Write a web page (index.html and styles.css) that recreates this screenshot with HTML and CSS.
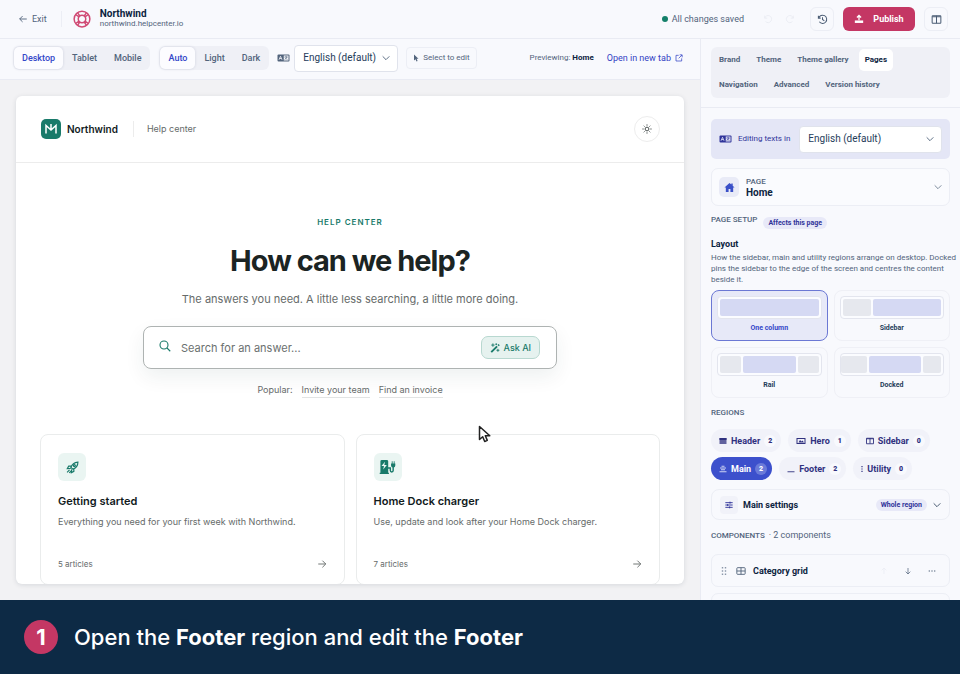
FILE: index.html
```html
<!DOCTYPE html>
<html lang="en">
<head>
  <meta charset="UTF-8" />
  <meta name="viewport" content="width=device-width, initial-scale=1.0"/>
  <title>Northwind - Help center editor</title>
  <link rel="stylesheet" href="styles.css">
</head>
<body>

  <header class="topbar">
    <a class="exit" href="#">
      <svg class="icon" viewBox="0 0 24 24"><path d="M21 12H4M11 5l-7 7 7 7"/></svg>
      Exit
    </a>
    <span class="divider"></span>
    <svg class="buoy" viewBox="0 0 24 24"><circle cx="12" cy="12" r="10.5"/><circle cx="12" cy="12" r="5"/><path d="M3.500 6l5 3.500M6 3.500l3.500 5M20.500 6l-5 3.500M18 3.500l-3.500 5M3.500 18l5-3.500M6 20.500l3.500-5M20.500 18l-5-3.500M18 20.500l-3.500-5"/></svg>
    <div class="site">
      <strong>Northwind</strong>
      <span>northwind.helpcenter.io</span>
    </div>
    <div class="topbar-right">
      <span class="saved">All changes saved</span>
      <button class="ghost-btn" disabled aria-label="Undo"><svg class="icon" viewBox="0 0 24 24"><path d="M4 4v6h6M4 10a8.500 8.500 0 1 1 2 8"/></svg></button>
      <button class="ghost-btn" disabled aria-label="Redo"><svg class="icon" viewBox="0 0 24 24"><path d="M20 4v6h-6M20 10a8.500 8.500 0 1 0-2 8"/></svg></button>
      <button class="square-btn" aria-label="History"><svg class="icon" viewBox="0 0 24 24"><path d="M3 4v5h5M3.500 9a9 9 0 1 1 1.500 8M12 7v5l4 3"/></svg></button>
      <button class="publish">
        <svg class="icon" viewBox="0 0 24 24"><path d="M12 15V4M7 8.500l5-5 5 5" stroke-width="3"/><path d="M2 18.500h20" stroke-width="6"/></svg>
        Publish
      </button>
      <button class="square-btn" aria-label="Toggle panel"><svg class="icon" viewBox="0 0 24 24"><rect x="2.500" y="4" width="19" height="16" rx="1.500"/><path d="M12 4v16M3 6h18"/></svg></button>
    </div>
  </header>

  <main class="workspace">
    <section class="canvas">
      <div class="toolbar">
        <div class="segmented">
          <button class="active">Desktop</button>
          <button>Tablet</button>
          <button>Mobile</button>
        </div>
        <div class="segmented modes">
          <button class="active">Auto</button>
          <button>Light</button>
          <button>Dark</button>
        </div>
        <svg class="lang-icon" viewBox="0 0 26 16"><rect x="1" y="1" width="24" height="14" rx="2" fill="currentColor"/><rect x="13.500" y="3" width="9.500" height="10" fill="#f7f8fc"/><path d="M4 11.500l3-7 3 7M5.500 9h3" stroke="#f7f8fc" stroke-width="1.600" fill="none"/><path d="M15 6h6.500M18.200 4v2M20 6l-4.500 5.500M16.500 7.500l4 4" stroke="currentColor" stroke-width="1.300" fill="none"/></svg>
        <div class="select">
          <select aria-label="Preview language"><option>English (default)</option></select>
          <svg class="icon" viewBox="0 0 24 24"><path d="M2 7l10 10L22 7"/></svg>
        </div>
        <button class="select-edit">
          <svg viewBox="0 0 12 16"><path d="M2 1v12l3-2.500 2 4.500 2.200-1L7.300 9.700H11z" fill="currentColor"/></svg>
          Select to edit
        </button>
        <span class="previewing">Previewing: <b>Home</b></span>
        <a class="new-tab" href="#">Open in new tab
          <svg class="icon" viewBox="0 0 24 24"><path d="M11 4H3v17h17v-8M14 2.500h7.500V10M21 3l-10 10"/></svg>
        </a>
      </div>

      <div class="stage">
        <div class="preview">
          <div class="preview-header">
            <svg class="logo" viewBox="0 0 20 20"><rect width="20" height="20" rx="5" fill="#197a6a"/><path d="M5 14.500V6.500l5 4.500 5-4.500v8M10 5v6" fill="none" stroke="#fff" stroke-width="1.500"/></svg>
            <strong>Northwind</strong>
            <span class="help-label">Help center</span>
            <button class="theme-toggle" aria-label="Theme"><svg class="icon" viewBox="0 0 24 24"><circle cx="12" cy="12" r="4.500"/><path d="M12 1v3M12 20v3M1 12h3M20 12h3M4.200 4.200l2 2M17.800 17.800l2 2M4.200 19.800l2-2M17.800 6.200l2-2"/></svg></button>
          </div>

          <div class="hero">
            <p class="eyebrow">HELP CENTER</p>
            <h1>How can we help?</h1>
            <p class="lead">The answers you need. A little less searching, a little more doing.</p>
            <div class="search">
              <svg class="icon" viewBox="0 0 24 24"><circle cx="10" cy="10" r="8"/><path d="M16 16l6.500 6.500"/></svg>
              <input type="search" placeholder="Search for an answer..." aria-label="Search for an answer">
              <button class="ask">
                <svg class="icon" viewBox="0 0 24 24"><path d="M3 22L17 8" stroke-width="4.500"/><path d="M19.500 6.500L22 4" stroke-width="4"/><path d="M7 1v8M3 5h8M15 1v4M13 3h4M19 14v7M15.500 17.500h7"/></svg>
                Ask AI
              </button>
            </div>
            <div class="popular">
              <span>Popular:</span>
              <a href="#">Invite your team</a>
              <a href="#">Find an invoice</a>
            </div>
          </div>

          <div class="categories">
            <a class="category" href="#">
              <span class="tile"><svg class="icon" viewBox="0 0 24 24"><path d="M9 12C11 6 15 2.500 22 2c0 7-3.500 11-9 13zM10 9.500H5L2.500 14l6-.5M14.500 14v5L10 21.500l.5-6M6.500 16.500L2 21M10 18l-4 4"/><circle cx="15.500" cy="8.500" r="1.800"/></svg></span>
              <h2>Getting started</h2>
              <p>Everything you need for your first week with Northwind.</p>
              <span class="meta">5 articles <svg class="icon" viewBox="0 0 24 24"><path d="M3 12h18M13 4l8 8-8 8"/></svg></span>
            </a>
            <a class="category" href="#">
              <span class="tile charger"><svg viewBox="0 0 24 22"><path d="M2 3a2 2 0 0 1 2-2h7a2 2 0 0 1 2 2v16h1v2H1v-2h1zM8.500 3.500l-5 6H7l-1 5 5-6.500H7.500zM18 3h1.200v3h1.600V3H22v3h1v3a3 3 0 0 1-2 2.800V16a3 3 0 0 1-6 0v-2.500h-2v-2h4V16a1 1 0 0 0 2 0v-4.200A3 3 0 0 1 17 9V6h1z" fill="currentColor" fill-rule="evenodd"/></svg></span>
              <h2>Home Dock charger</h2>
              <p>Use, update and look after your Home Dock charger.</p>
              <span class="meta">7 articles <svg class="icon" viewBox="0 0 24 24"><path d="M3 12h18M13 4l8 8-8 8"/></svg></span>
            </a>
          </div>
        </div>
      </div>
    </section>

    <aside class="panel">
      <nav class="tabs">
        <button>Brand</button>
        <button>Theme</button>
        <button>Theme gallery</button>
        <button class="active">Pages</button>
        <button>Navigation</button>
        <button>Advanced</button>
        <button>Version history</button>
      </nav>

      <div class="panel-body">
        <div class="editing">
          <svg class="lang-icon" viewBox="0 0 26 16"><rect x="1" y="1" width="24" height="14" rx="2" fill="currentColor"/><rect x="13.500" y="3" width="9.500" height="10" fill="#e4e6f6"/><path d="M4 11.500l3-7 3 7M5.500 9h3" stroke="#e4e6f6" stroke-width="1.600" fill="none"/><path d="M15 6h6.500M18.200 4v2M20 6l-4.500 5.500M16.500 7.500l4 4" stroke="currentColor" stroke-width="1.300" fill="none"/></svg>
          <label for="textLang">Editing texts in</label>
          <div class="select">
            <select id="textLang"><option>English (default)</option></select>
            <svg class="icon" viewBox="0 0 24 24"><path d="M2 7l10 10L22 7"/></svg>
          </div>
        </div>

        <button class="page-card">
          <span class="page-icon"><svg viewBox="0 0 24 24"><path d="M12 2L1 12h3v10h6v-7h4v7h6V12h3l-4-3.700V3h-3v2.600z" fill="currentColor"/></svg></span>
          <span class="page-name"><small>PAGE</small>Home</span>
          <svg class="icon chevron" viewBox="0 0 24 24"><path d="M2 7l10 10L22 7"/></svg>
        </button>

        <div class="setup">
          <h3>PAGE SETUP</h3>
          <span class="badge">Affects this page</span>
        </div>

        <h4>Layout</h4>
        <p class="hint">How the sidebar, main and utility regions arrange on desktop. Docked pins the sidebar to the edge of the screen and centres the content beside it.</p>

        <div class="layouts">
          <button class="layout active"><span class="frame one"><i class="fill"></i></span>One column</button>
          <button class="layout"><span class="frame side"><i></i><i class="fill"></i></span>Sidebar</button>
          <button class="layout"><span class="frame rail"><i></i><i class="fill"></i><i></i></span>Rail</button>
          <button class="layout"><span class="frame docked"><i></i><i class="fill"></i><i></i></span>Docked</button>
        </div>

        <h3>REGIONS</h3>
        <div class="regions">
          <button><svg viewBox="0 0 16 16"><path d="M1 2h14v12H1z" fill="currentColor" opacity=".75"/><path d="M1 2h14v4H1z" fill="currentColor"/></svg>Header<b>2</b></button>
          <button><svg class="wide" viewBox="0 0 20 16"><path d="M1 2h18v12H1zM3 4v8h14V4zM5 11l3-5 3 3 2-2 3 4z" fill="currentColor" fill-rule="evenodd"/></svg>Hero<b>1</b></button>
          <button><svg viewBox="0 0 16 16"><path d="M1 2.500h14v11H1zM8 2v11M1 3.500h14" fill="none" stroke="currentColor" stroke-width="1.800"/></svg>Sidebar<b>0</b></button>
          <button class="active"><svg viewBox="0 0 16 16"><path d="M5 2.500h6M2 6h12M4 9.500h8M1 13.500h14" fill="none" stroke="currentColor" stroke-width="1.500"/></svg>Main<b>2</b></button>
          <button><svg viewBox="0 0 16 16"><path d="M1 13.500h14" stroke="currentColor" stroke-width="1.800"/></svg>Footer<b>2</b></button>
          <button><svg class="thin" viewBox="0 0 4 16"><path d="M2 2v12" stroke="currentColor" stroke-width="2.400" stroke-dasharray="2.400"/></svg>Utility<b>0</b></button>
        </div>

        <button class="settings">
          <span class="settings-icon"><svg class="icon" viewBox="0 0 24 24"><path d="M1 5h22M1 12h22M1 19h22M15 2v6M8 9v6M14 16v6" stroke-width="2.800"/></svg></span>
          Main settings
          <span class="badge">Whole region</span>
          <svg class="icon chevron" viewBox="0 0 24 24"><path d="M2 7l10 10L22 7"/></svg>
        </button>

        <h3 class="components">COMPONENTS <span>· 2 components</span></h3>

        <div class="component">
          <svg class="grip" viewBox="0 0 6 10"><path d="M1.500 1v8M4.500 1v8" stroke="currentColor" stroke-width="1.400" stroke-dasharray="1.600"/></svg>
          <svg class="icon" viewBox="0 0 24 24"><rect x="2" y="4" width="20" height="16" rx="2"/><path d="M12 4v16M2 12h20"/></svg>
          <strong>Category grid</strong>
          <button disabled aria-label="Move up"><svg class="icon" viewBox="0 0 24 24"><path d="M12 21V3M5 10l7-7 7 7"/></svg></button>
          <button aria-label="Move down"><svg class="icon" viewBox="0 0 24 24"><path d="M12 3v18M5 14l7 7 7-7"/></svg></button>
          <button aria-label="More"><svg class="icon" viewBox="0 0 24 24"><path d="M2 12h4M10 12h4M18 12h4" stroke-width="3.500"/></svg></button>
        </div>
        <div class="component"></div>
      </div>
    </aside>
  </main>

  <footer class="caption">
    <span class="step">1</span>
    <p>Open the <b>Footer</b> region and edit the <b>Footer</b></p>
  </footer>

  <svg class="cursor" viewBox="0 0 14 18"><path d="M1.500 1.500v13l3.200-2.800 2 4.800 2.600-1.100-2-4.600h4.500z" fill="#fff" stroke="#222" stroke-width="1.500" stroke-linejoin="round"/></svg>

</body>
</html>
```

FILE: styles.css
```css
* {
  box-sizing: border-box;
}

body {
  margin: 0;
  height: 100vh;
  display: flex;
  flex-direction: column;
  overflow: hidden;
  font-family: Roboto, sans-serif;
  font-size: 9px;
  line-height: 12px;
  color: #52647c;
  background: #f8f9fd;
}

h1, h2, h3, h4, p {
  margin: 0;
}

button, select, input {
  font: inherit;
  color: inherit;
  margin: 0;
  padding: 0;
  border: 0;
  background: none;
}

a {
  color: inherit;
  text-decoration: none;
}

svg {
  display: block;
  flex: none;
}

.icon {
  width: 10px;
  height: 10px;
  fill: none;
  stroke: currentColor;
  stroke-width: 2.2;
}

/* top bar */
.topbar {
  flex: none;
  display: flex;
  align-items: center;
  height: 39px;
  padding: 0 12px 0 18px;
  border-bottom: 1px solid #e9ebf3;
}

.exit {
  display: flex;
  align-items: center;
  gap: 4px;
}

.divider {
  width: 1px;
  height: 16px;
  margin: 0 11px 0 14px;
  background: #eceef5;
}

.buoy {
  width: 18px;
  height: 18px;
  margin-right: 9px;
  fill: none;
  stroke: #d04a74;
  stroke-width: 2;
}

.site {
  display: flex;
  flex-direction: column;
  font-size: 8px;
  line-height: 10px;
}

.site strong {
  font-size: 10px;
  color: #0c2340;
}

.topbar-right {
  display: flex;
  align-items: center;
  margin-left: auto;
}

.saved {
  display: flex;
  align-items: center;
  gap: 4px;
  margin-right: 13px;
}

.saved::before {
  content: "";
  width: 6px;
  height: 6px;
  border-radius: 50%;
  background: #14806a;
}

.ghost-btn {
  width: 22px;
  display: flex;
  justify-content: center;
  color: #eaecf3;
}

.square-btn {
  display: flex;
  align-items: center;
  justify-content: center;
  width: 24px;
  height: 24px;
  margin-left: 9px;
  border: 1px solid #eceef5;
  border-radius: 6px;
  color: #4a5c74;
}

.square-btn .icon {
  width: 11px;
  height: 11px;
}

.publish {
  display: flex;
  align-items: center;
  justify-content: center;
  gap: 9px;
  width: 72px;
  height: 24px;
  margin-left: 9px;
  border-radius: 6px;
  background: #c43764;
  color: #fff;
  font-weight: 700;
}

/* workspace */
.workspace {
  flex: 1;
  min-height: 0;
  display: grid;
  grid-template-columns: 1fr 260px;
}

.canvas {
  display: flex;
  flex-direction: column;
  min-width: 0;
  min-height: 0;
}

.toolbar {
  flex: none;
  display: flex;
  align-items: center;
  height: 41px;
  padding: 0 17px 2px 13px;
  border-bottom: 1px solid #e9ebf3;
}

.segmented {
  display: flex;
  gap: 1px;
  padding: 1px;
  border-radius: 6px;
  background: #eff0f6;
  font-weight: 500;
}

.segmented button {
  height: 22px;
  padding: 0 8px;
  border-radius: 5px;
}

.segmented .active {
  background: #fcfcff;
  color: #3447c9;
  box-shadow: 0 0 3px rgba(30, 40, 90, 0.15);
}

.modes {
  margin: 0 8px 0 9px;
}

.lang-icon {
  width: 13px;
  height: 8px;
}

.select {
  display: grid;
  align-items: center;
  height: 27px;
  margin-left: 4px;
  border: 1px solid #e0e3ec;
  border-radius: 4px;
  background: #fff;
  font-size: 10px;
  color: #253c5a;
}

.select select {
  grid-area: 1 / 1;
  width: 100%;
  height: 100%;
  padding: 0 21px 0 8px;
  appearance: none;
}

.select .icon {
  grid-area: 1 / 1;
  justify-self: end;
  width: 8px;
  height: 8px;
  margin-right: 7px;
  pointer-events: none;
}

.select-edit {
  display: flex;
  align-items: center;
  gap: 4px;
  height: 22px;
  margin-left: 8px;
  padding: 0 6px;
  border: 1px solid #eceef5;
  border-radius: 4px;
  font-size: 8px;
}

.select-edit svg {
  width: 6px;
  height: 8px;
}

.previewing {
  margin-left: auto;
  font-size: 8px;
}

.previewing b {
  color: #0c2340;
}

.new-tab {
  display: flex;
  align-items: center;
  gap: 4px;
  margin-left: 13px;
  color: #3342c4;
}

.new-tab .icon {
  width: 8px;
  height: 8px;
}

.stage {
  flex: 1;
  min-height: 0;
  display: flex;
  padding: 16px;
  background: #f2f2f4;
}

/* help center preview */
.preview {
  flex: 1;
  overflow: hidden;
  border-radius: 6px;
  background: #fff;
  box-shadow: 0 1px 5px rgba(20, 30, 50, 0.12);
  font-family: Inter, sans-serif;
  color: #666b6a;
}

.preview-header {
  display: flex;
  align-items: center;
  height: 67px;
  padding: 0 24px 0 25px;
  border-bottom: 1px solid #ececec;
}

.logo {
  width: 20px;
  height: 20px;
  margin-right: 6px;
}

.preview-header strong {
  font-size: 10px;
  font-weight: 600;
  color: #111a1c;
}

.help-label {
  margin-left: 15px;
  padding: 2px 0 2px 13px;
  border-left: 1px solid #ececec;
}

.theme-toggle {
  display: flex;
  align-items: center;
  justify-content: center;
  width: 26px;
  height: 26px;
  margin-left: auto;
  border: 1px solid #ededed;
  border-radius: 50%;
  color: #3c4443;
}

.hero {
  display: flex;
  flex-direction: column;
  align-items: center;
  padding-top: 53px;
}

.eyebrow {
  font-size: 8px;
  font-weight: 600;
  letter-spacing: 1px;
  color: #197a6a;
}

h1 {
  margin-top: 13px;
  font-size: 29px;
  line-height: 40px;
  letter-spacing: -1px;
  color: #1b2423;
}

.lead {
  margin-top: 10px;
  font-size: 11px;
  line-height: 16px;
}

.search {
  display: flex;
  align-items: center;
  width: 414px;
  max-width: 90%;
  height: 43px;
  margin-top: 19px;
  padding: 0 16px 0 15px;
  border: 1px solid #aeb3b2;
  border-radius: 8px;
  box-shadow: 0 8px 20px rgba(20, 60, 50, 0.07);
}

.search > .icon {
  width: 12px;
  height: 12px;
  margin-bottom: 4px;
  color: #197a6a;
}

.search input {
  flex: 1;
  min-width: 0;
  margin-left: 10px;
  font-size: 11px;
  outline: 0;
}

.search input::placeholder {
  color: #6b706f;
  opacity: 1;
}

.ask {
  display: flex;
  align-items: center;
  gap: 4px;
  height: 23px;
  padding: 0 8px;
  border: 1px solid #b8d8d0;
  border-radius: 7px;
  background: #e6f2ef;
  color: #197a6a;
  font-weight: 500;
}

.popular {
  display: flex;
  gap: 9px;
  margin-top: 15px;
}

.popular a {
  padding-bottom: 1px;
  border-bottom: 1px solid #e2e4e4;
}

.categories {
  display: grid;
  grid-template-columns: 1fr 1fr;
  gap: 11px;
  margin-top: 36px;
  padding: 0 24px;
}

.category {
  height: 151px;
  padding: 18px 17px;
  border: 1px solid #eaecec;
  border-radius: 8px;
}

.tile {
  display: flex;
  align-items: center;
  justify-content: center;
  width: 28px;
  height: 28px;
  border-radius: 6px;
  background: #eaf5f2;
  color: #197a6a;
}

.tile .icon {
  width: 13px;
  height: 13px;
}

.charger svg {
  width: 17px;
  height: 16px;
}

.category h2 {
  margin-top: 12px;
  font-size: 11px;
  font-weight: 600;
  line-height: 16px;
  color: #111a1c;
}

.category p {
  margin-top: 7px;
}

.meta {
  display: flex;
  align-items: center;
  justify-content: space-between;
  margin-top: 30px;
  font-size: 8px;
}

/* side panel */
.panel {
  min-height: 0;
  overflow: hidden;
  border-left: 1px solid #e9ebf3;
}

.tabs {
  display: flex;
  flex-wrap: wrap;
  gap: 3px 4px;
  margin: 8px 10px 9px;
  padding: 2px 8px 2px 2px;
  border-radius: 6px;
  background: #eff0f6;
  font-size: 8px;
  font-weight: 700;
}

.tabs button {
  height: 22px;
  padding: 0 6px;
  border-radius: 5px;
}

.tabs .active {
  background: #fff;
  color: #0c2340;
}

.panel-body {
  padding: 11px 10px 0;
  border-top: 1px solid #e9ebf3;
}

.editing {
  display: flex;
  align-items: center;
  height: 40px;
  padding: 0 8px;
  border-radius: 5px;
  background: #e4e6f6;
  font-size: 8px;
  color: #30349a;
}

.editing label {
  margin: 0 5px 0 6px;
}

.editing .select {
  flex: 1;
}

.page-card {
  display: flex;
  align-items: center;
  width: 100%;
  height: 38px;
  margin-top: 9px;
  padding: 0 7px;
  border: 1px solid #eceef5;
  border-radius: 7px;
  background: #fafbfe;
  text-align: left;
}

.page-icon {
  display: flex;
  align-items: center;
  justify-content: center;
  width: 20px;
  height: 20px;
  margin-right: 7px;
  border-radius: 5px;
  background: #e9ebf7;
  color: #3a50c8;
}

.page-icon svg {
  width: 11px;
  height: 11px;
}

.page-name {
  font-size: 10px;
  line-height: 11px;
  font-weight: 700;
  color: #0c2340;
}

.page-name small {
  display: block;
  font-size: 8px;
  font-weight: 500;
  color: #52647c;
}

.chevron {
  width: 8px;
  height: 8px;
}

.page-card .chevron {
  margin-left: auto;
}

.setup {
  display: flex;
  align-items: flex-start;
  gap: 6px;
  margin-top: 8px;
}

h3 {
  font-size: 8px;
  font-weight: 500;
  line-height: 12px;
}

.badge {
  padding: 0 5px;
  border-radius: 6px;
  background: #e8e9f8;
  font-size: 7px;
  font-weight: 700;
  line-height: 12px;
  color: #30349a;
}

.setup .badge {
  margin-top: 3px;
}

h4 {
  margin-top: 9px;
  font-size: 9px;
  line-height: 13px;
  color: #0c2340;
}

.hint {
  margin: 1px -9px 0 0;
  font-size: 8px;
  line-height: 11px;
}

.layouts {
  display: grid;
  grid-template-columns: 1fr 1fr;
  gap: 6px;
  margin: 5px 0 9px;
}

.layout {
  display: flex;
  flex-direction: column;
  gap: 2px;
  height: 51px;
  padding: 5px;
  border: 1px solid #eff0f6;
  border-radius: 8px;
  font-size: 7px;
  font-weight: 700;
  line-height: 14px;
  color: #253c5a;
}

.layout.active {
  border-color: #6b78d4;
  background: #e7e9f8;
  color: #3447c9;
}

.frame {
  display: grid;
  gap: 2px;
  width: 100%;
  height: 26px;
  padding: 2px;
  border: 1px solid #e3e5ee;
  border-radius: 4px;
  background: #fbfcff;
}

.frame i {
  border-radius: 2px;
  background: #e6e8ee;
}

.frame .fill {
  background: #d5d9f3;
}

.side {
  grid-template-columns: 3fr 7fr;
}

.rail {
  grid-template-columns: 2fr 5fr 2fr;
}

.docked {
  grid-template-columns: 27fr 52fr 18fr;
  padding-left: 0;
}

.regions {
  display: flex;
  flex-wrap: wrap;
  gap: 5px 7px;
  margin: 10px 0 9px;
}

.regions button {
  display: flex;
  align-items: center;
  gap: 4px;
  height: 23px;
  padding: 0 5px 0 8px;
  border-radius: 12px;
  background: #f1f2f9;
  font-weight: 700;
  color: #30317f;
}

.regions svg {
  width: 8px;
  height: 8px;
}

.regions .wide {
  width: 10px;
}

.regions .thin {
  width: 2px;
}

.regions b {
  width: 12px;
  border-radius: 6px;
  background: #f8f9fd;
  font-size: 7px;
}

.regions .active {
  background: #3c50cc;
  color: #fff;
}

.regions .active b {
  background: #6a7ad9;
}

.settings {
  display: flex;
  align-items: center;
  width: 100%;
  height: 31px;
  padding: 0 8px;
  border: 1px solid #eceef5;
  border-radius: 8px;
  font-weight: 700;
  color: #0c2340;
}

.settings-icon {
  display: flex;
  align-items: center;
  justify-content: center;
  width: 18px;
  height: 18px;
  margin-right: 5px;
  border-radius: 4px;
  background: #f1f2f9;
  color: #30349a;
}

.settings-icon .icon {
  width: 8px;
  height: 8px;
}

.settings .badge {
  margin: 0 6px 0 auto;
}

.components {
  margin: 9px 0 12px;
}

.components span {
  margin-left: 2px;
  font-size: 9px;
  font-weight: 400;
}

.component {
  display: flex;
  align-items: center;
  height: 33px;
  margin-bottom: 6px;
  padding: 0 9px;
  border: 1px solid #eceef5;
  border-radius: 7px;
}

.component strong {
  flex: 1;
  margin-left: 7px;
  font-weight: 700;
  color: #0c2340;
}

.grip {
  width: 6px;
  height: 10px;
  margin-right: 9px;
  color: #8c98aa;
}

.component button {
  display: flex;
  justify-content: center;
  width: 16px;
  margin-left: 8px;
}

.component button .icon {
  width: 8px;
  height: 8px;
}

.component button:disabled {
  color: #eaecf3;
}

/* caption */
.caption {
  flex: none;
  display: flex;
  align-items: center;
  gap: 16px;
  height: 74px;
  padding: 0 24px;
  background: #0d2a45;
  color: #fff;
  font-family: Inter, sans-serif;
  font-size: 22px;
  font-weight: 500;
  line-height: 34px;
}

.caption b {
  font-weight: 700;
}

.step {
  width: 34px;
  height: 34px;
  border-radius: 50%;
  background: #c43764;
  font-weight: 700;
  text-align: center;
}

.cursor {
  position: absolute;
  left: 478px;
  top: 425px;
  width: 14px;
  height: 18px;
}
```
